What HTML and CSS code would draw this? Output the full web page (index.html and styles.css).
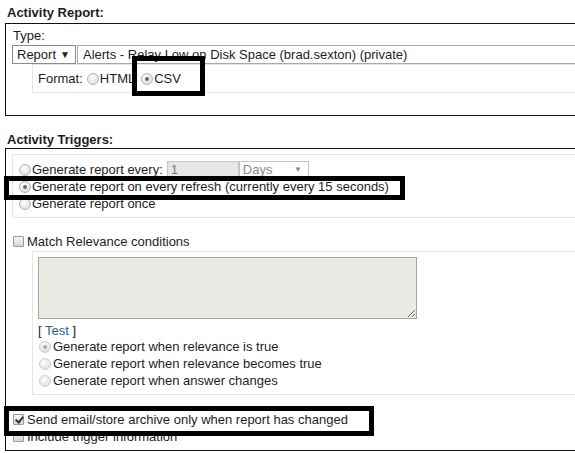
FILE: index.html
```html
<!DOCTYPE html>
<html lang="en">
<head>
    <meta charset="UTF-8">
    <title>Activity Report</title>
    <link rel="stylesheet" href="styles.css">
</head>
<body>
    <div class="section-title first">Activity Report:</div>
    <div class="panel report">
        <div class="label">Type:</div>
        <div class="type-row">
            <span class="pick report-pick">Report <span class="arrow">▼</span></span>
            <span class="textbox">Alerts - Relay Low on Disk Space (brad.sexton) (private)</span>
        </div>
        <div class="subpanel format">
            Format:<input type="radio" name="fmt" class="radio fmt-radio">HTML<input type="radio" name="fmt" class="radio fmt-radio" checked>CSV
        </div>
        <div class="mark mark-csv"></div>
    </div>

    <div class="section-title">Activity Triggers:</div>
    <div class="panel triggers">
        <div class="subpanel schedule">
            <div class="opt-row">
                <input type="radio" name="when" class="radio">Generate report every:
                <span class="field num">1</span><span class="pick days">Days <span class="arrow">▼</span></span>
            </div>
            <div class="opt-row">
                <input type="radio" name="when" class="radio" checked>Generate report on every refresh (currently every 15 seconds)
            </div>
            <div class="opt-row">
                <input type="radio" name="when" class="radio">Generate report once
            </div>
        </div>

        <div class="opt-row check-row match">
            <input type="checkbox" class="check">Match Relevance conditions
        </div>
        <div class="subpanel relevance">
            <textarea class="rel-text"></textarea>
            <div class="test-line">[ <a class="link">Test</a> ]</div>
            <div class="opt-row">
                <input type="radio" name="rel" class="radio" checked disabled>Generate report when relevance is true
            </div>
            <div class="opt-row">
                <input type="radio" name="rel" class="radio" disabled>Generate report when relevance becomes true
            </div>
            <div class="opt-row">
                <input type="radio" name="rel" class="radio" disabled>Generate report when answer changes
            </div>
        </div>

        <div class="opt-row check-row send">
            <input type="checkbox" class="check" checked>Send email/store archive only when report has changed
        </div>
        <div class="opt-row check-row">
            <input type="checkbox" class="check">Include trigger information
        </div>

        <div class="mark mark-refresh"></div>
        <div class="mark mark-send"></div>
    </div>
</body>
</html>
```

FILE: styles.css
```css
html, body {
    overflow: hidden;
}
body {
    margin: 0;
    padding: 5px 0 0 5px;
    font-family: "Liberation Sans", Arial, sans-serif;
    font-size: 13px;
    line-height: 15px;
    color: #1e1e1e;
    background: #fff;
}
.section-title {
    font-weight: bold;
    padding-left: 2px;
    margin-top: 16px;
}
.section-title.first { margin-top: 0; }

.panel {
    position: relative;
    border: 1px solid #111;
    border-right: none;
    padding: 4px 0 0 6px;
}
.report {
    margin-top: 3px;
    padding-bottom: 22px;
}
.triggers {
    margin-top: 1px;
    padding-top: 5px;
    padding-bottom: 5px;
}
.label { padding-left: 1px; }

.type-row {
    display: flex;
    margin-top: 2px;
    height: 19px;
}
.pick {
    display: flex;
    align-items: center;
    justify-content: space-between;
    box-sizing: border-box;
    border: 1px solid #8c8c8c;
    background: #fff;
    padding: 0 5px 0 4px;
}
.arrow {
    font-size: 10px;
    line-height: 10px;
}
.report-pick { width: 64px; }
.textbox {
    flex: 1;
    display: flex;
    align-items: center;
    margin-left: 1px;
    border: 1px solid #a9a9a9;
    border-right: none;
    padding-left: 5px;
    white-space: nowrap;
}

.subpanel {
    border: 1px solid #e6e6e6;
    border-right: none;
}
.format {
    margin-left: 20px;
    padding: 6px 0 6px 5px;
    display: flex;
    align-items: center;
}

.radio {
    appearance: none;
    -webkit-appearance: none;
    box-sizing: border-box;
    width: 12px;
    height: 12px;
    margin: 0 1px 0 0;
    border: 1px solid #b4b4b4;
    border-radius: 50%;
    background: radial-gradient(circle at 40% 35%, #fff 0%, #e6e6e6 60%, #d0d0d0 100%);
    display: inline-block;
    position: relative;
    flex: none;
}
.radio:checked::after {
    content: "";
    position: absolute;
    left: 3px;
    top: 3px;
    width: 4px;
    height: 4px;
    border-radius: 50%;
    background: #666;
}
.radio:disabled { border-color: #cfcfcf; }
.radio:disabled:checked::after { background: #a9a9a9; }
.fmt-radio { margin-left: 4px; }
.fmt-radio + .fmt-radio { margin-left: 6px; }

.check {
    appearance: none;
    -webkit-appearance: none;
    box-sizing: border-box;
    width: 11px;
    height: 11px;
    margin: 0 3px 0 0;
    border: 1px solid #9a9a9a;
    border-radius: 1px;
    background: linear-gradient(#f4f4f4, #d6d6d6);
    position: relative;
    flex: none;
}
.check:checked::after {
    content: "";
    position: absolute;
    left: 3px;
    top: 0;
    width: 3px;
    height: 6px;
    border: solid #333;
    border-width: 0 2px 2px 0;
    transform: rotate(40deg);
}

.schedule {
    padding: 6px 0 5px 6px;
}
.opt-row {
    display: flex;
    align-items: center;
    height: 17px;
    white-space: nowrap;
}
.field {
    box-sizing: border-box;
    height: 18px;
    display: flex;
    align-items: center;
}
.num {
    width: 72px;
    margin-left: 4px;
    padding-left: 3px;
    background: #e6e6e6;
    border: 1px solid #c4c4c4;
    color: #7a7a7a;
}
.days {
    width: 70px;
    height: 18px;
    border-color: #c4c4c4;
    color: #8a8a8a;
    padding: 0 6px 0 3px;
}
.days .arrow { font-size: 8px; }

.match {
    margin-top: 15px;
}
.relevance {
    margin: 1px 0 0 20px;
    padding: 5px 0 5px 5px;
}
.rel-text {
    display: block;
    box-sizing: border-box;
    width: 379px;
    height: 62px;
    margin: 0;
    border: 1px solid #a6a6a6;
    background: #ebe9e4;
    font: inherit;
}
.test-line {
    margin-top: 4px;
}
.link { color: #2f6492; }
.relevance .radio { margin-left: 1px; margin-right: 2px; }

.send { margin-top: 16px; }
.check-row .check { margin-left: 1px; }

.mark {
    position: absolute;
    box-sizing: border-box;
    border: 5px solid #000;
}
.mark-csv {
    left: 126px;
    top: 32px;
    width: 73px;
    height: 40px;
}
.mark-refresh {
    left: -2px;
    top: 27px;
    width: 401px;
    height: 24px;
}
.mark-send {
    left: -2px;
    top: 257px;
    width: 370px;
    height: 30px;
}
```
